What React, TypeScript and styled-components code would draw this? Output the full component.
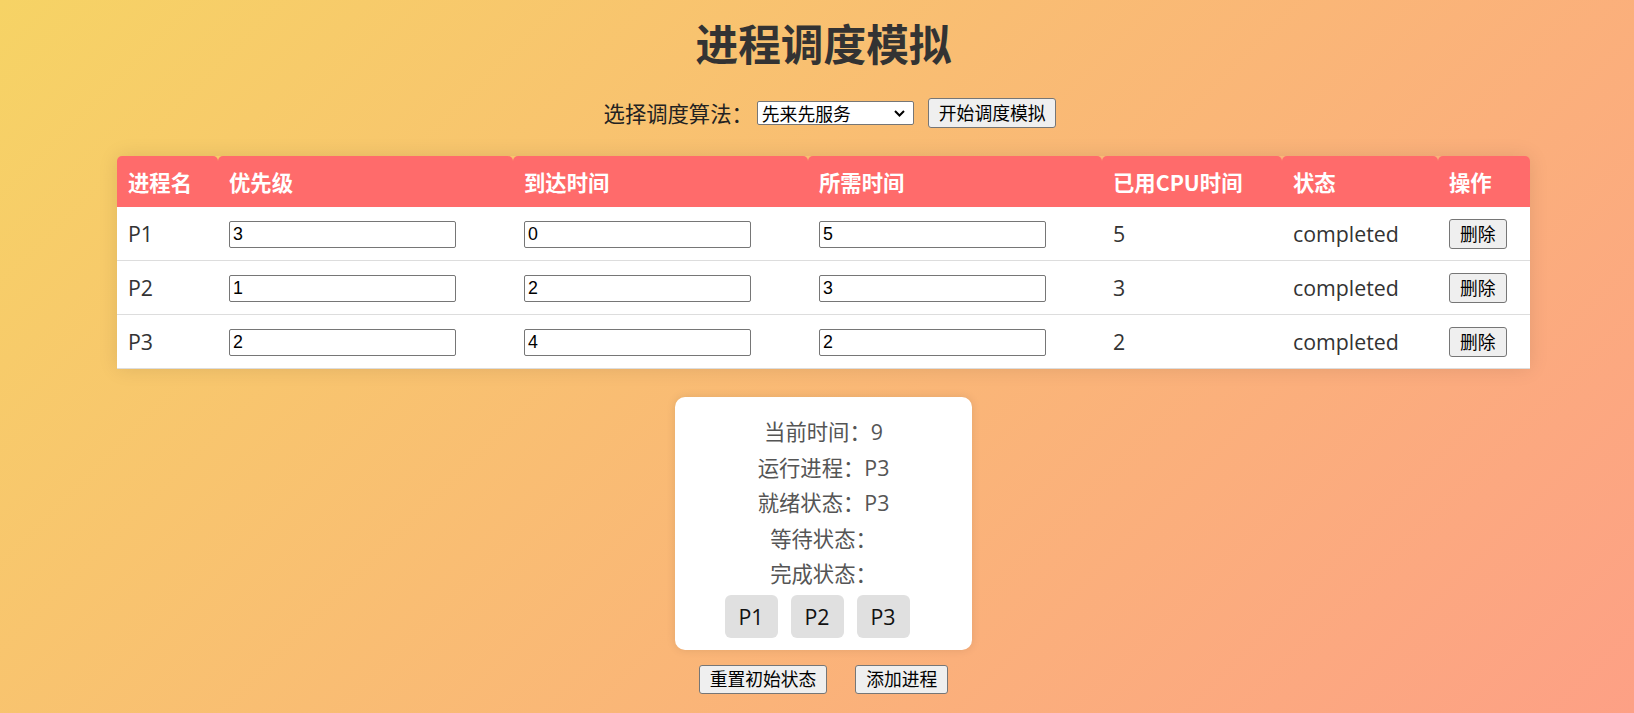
import React from 'react';
import styled, { createGlobalStyle } from 'styled-components';

const GlobalStyle = createGlobalStyle`
  html, body { margin: 0; padding: 0; }
  body {
    font-family: "Open Sans", "Noto Sans CJK SC", sans-serif;
    color: #333;
  }
`;

const Page = styled.div`
  min-height: 100vh;
  box-sizing: border-box;
  padding: 18px 8px 20px 21px;
  background: linear-gradient(135deg, #f6d365 0%, #fda085 100%);
  display: flex;
  flex-direction: column;
  align-items: center;
`;

const Title = styled.h1`
  margin: 0;
  font-family: "Noto Sans CJK SC", sans-serif;
  font-size: 42.67px;
  line-height: 50px;
  font-weight: 700;
  color: #333;
`;

const Controls = styled.div`
  margin-top: 30px;
  height: 30px;
  display: flex;
  align-items: center;
  padding-left: 13px;
`;

const Label = styled.label`
  font-family: "Noto Sans CJK SC", sans-serif;
  font-size: 21.33px;
  line-height: 30px;
  color: #222;
`;

const SelectWrap = styled.div`
  position: relative;
  margin: 0 14px 0 4px;
  width: 157px;
  height: 24px;
`;

const Select = styled.select`
  appearance: none;
  -webkit-appearance: none;
  display: block;
  width: 100%;
  height: 100%;
  box-sizing: border-box;
  font-family: "Noto Sans CJK SC", sans-serif;
  font-size: 17.78px;
  line-height: 22px;
  border: 1px solid #767676;
  border-radius: 2px;
  background: #fff;
  color: #000;
  padding: 0 24px 0 4px;
  margin: 0;
`;

const Chevron = styled.svg`
  position: absolute;
  right: 9px;
  top: 9px;
  width: 11px;
  height: 7px;
  pointer-events: none;
`;

const Button = styled.button<{ $h?: number }>`
  height: ${(p) => p.$h ?? 30}px;
  box-sizing: border-box;
  padding: 0 10px;
  font-family: "Noto Sans CJK SC", sans-serif;
  font-size: 17.78px;
  line-height: 1;
  color: #000;
  background: #efefef;
  border: 1px solid #767676;
  border-radius: 3px;
  cursor: pointer;
`;

const Table = styled.table`
  margin-top: 28px;
  width: 1413px;
  table-layout: fixed;
  border-collapse: separate;
  border-spacing: 0;
  box-shadow: 0 0 20px rgba(0, 0, 0, 0.1);
  border-radius: 5px 5px 0 0;
`;

const Th = styled.th<{ $w: number }>`
  width: ${(p) => p.$w}px;
  box-sizing: border-box;
  padding: 11.5px 11px;
  text-align: left;
  font-family: "Noto Sans CJK SC", sans-serif;
  font-size: 21.33px;
  line-height: 28px;
  font-weight: 700;
  color: #fff;
  background: #ff6b6b;
  border-radius: 5px 5px 0 0;
`;

const Td = styled.td`
  padding: 11.5px 11px;
  background: #fff;
  border-bottom: 1px solid #ddd;
  font-size: 21.33px;
  line-height: 28px;
  color: #333;
  vertical-align: middle;
`;

const NumInput = styled.input`
  display: block;
  width: 227px;
  height: 27px;
  margin-top: 2px;
  box-sizing: border-box;
  border: 1px solid #767676;
  border-radius: 2px;
  padding: 0 3px;
  font-family: "Liberation Sans", Arial, sans-serif;
  font-size: 17.78px;
  color: #000;
  background: #fff;
`;

const InfoBox = styled.div`
  margin-top: 28px;
  width: 297px;
  box-sizing: border-box;
  background: #fff;
  border-radius: 10px;
  box-shadow: 0 0 10px rgba(0, 0, 0, 0.1);
  padding: 17px 0 12px;
  text-align: center;
  color: #555;
  font-size: 21.33px;
`;

const InfoLine = styled.div`
  line-height: 35.5px;
`;

const ChipRow = styled.div`
  margin-top: 3px;
  display: flex;
  justify-content: center;
`;

const Chip = styled.span`
  width: 53px;
  height: 43px;
  margin-right: 13px;
  border-radius: 6px;
  background: #e0e0e0;
  color: #111;
  line-height: 43px;
  text-align: center;
`;

const Footer = styled.div`
  margin-top: 15px;
  display: flex;
  gap: 28px;
`;

const columns: { title: string; w: number }[] = [
  { title: '进程名', w: 101 },
  { title: '优先级', w: 295 },
  { title: '到达时间', w: 295 },
  { title: '所需时间', w: 294 },
  { title: '已用CPU时间', w: 180 },
  { title: '状态', w: 156 },
  { title: '操作', w: 92 },
];

const procs = [
  { name: 'P1', priority: 3, arrival: 0, need: 5, used: 5, state: 'completed' },
  { name: 'P2', priority: 1, arrival: 2, need: 3, used: 3, state: 'completed' },
  { name: 'P3', priority: 2, arrival: 4, need: 2, used: 2, state: 'completed' },
];

export default function App() {
  return (
    <>
      <GlobalStyle />
      <Page>
        <Title>进程调度模拟</Title>
        <Controls>
          <Label>选择调度算法：</Label>
          <SelectWrap>
            <Select defaultValue="fcfs">
              <option value="fcfs">先来先服务</option>
              <option value="priority">优先级调度</option>
              <option value="rr">时间片轮转</option>
            </Select>
            <Chevron viewBox="0 0 11 7">
              <polyline points="1,1 5.5,5.5 10,1" fill="none" stroke="#000" strokeWidth="2" />
            </Chevron>
          </SelectWrap>
          <Button>开始调度模拟</Button>
        </Controls>
        <Table>
          <thead>
            <tr>
              {columns.map((c) => (
                <Th key={c.title} $w={c.w}>
                  {c.title}
                </Th>
              ))}
            </tr>
          </thead>
          <tbody>
            {procs.map((p) => (
              <tr key={p.name}>
                <Td>{p.name}</Td>
                <Td>
                  <NumInput type="text" defaultValue={String(p.priority)} />
                </Td>
                <Td>
                  <NumInput type="text" defaultValue={String(p.arrival)} />
                </Td>
                <Td>
                  <NumInput type="text" defaultValue={String(p.need)} />
                </Td>
                <Td>{p.used}</Td>
                <Td>{p.state}</Td>
                <Td>
                  <Button>删除</Button>
                </Td>
              </tr>
            ))}
          </tbody>
        </Table>
        <InfoBox>
          <InfoLine>当前时间：9</InfoLine>
          <InfoLine>运行进程：P3</InfoLine>
          <InfoLine>就绪状态：P3</InfoLine>
          <InfoLine>等待状态：</InfoLine>
          <InfoLine>完成状态：</InfoLine>
          <ChipRow>
            <Chip>P1</Chip>
            <Chip>P2</Chip>
            <Chip>P3</Chip>
          </ChipRow>
        </InfoBox>
        <Footer>
          <Button $h={29}>重置初始状态</Button>
          <Button $h={29}>添加进程</Button>
        </Footer>
      </Page>
    </>
  );
}
